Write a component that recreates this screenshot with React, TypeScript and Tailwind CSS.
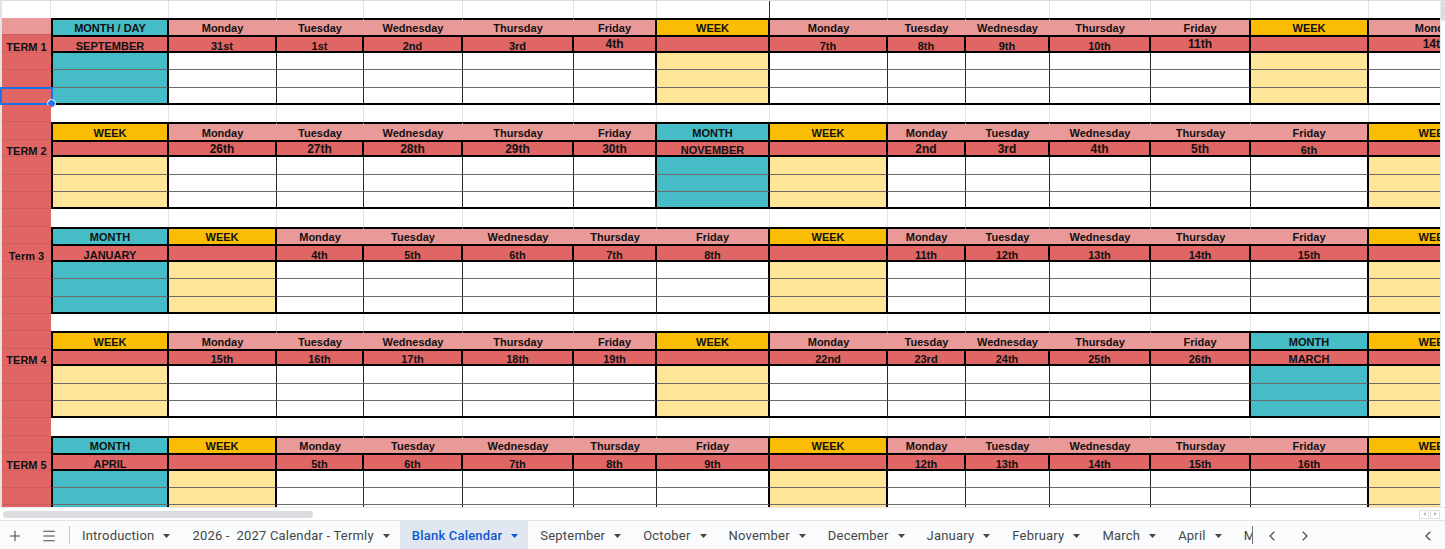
import { Plus, Menu, ChevronLeft, ChevronRight } from "lucide-react"

type Col =
    | { k: 'day', day: string, date: string, big?: boolean }
    | { k: 'month', head: string, month: string }
    | { k: 'week' }

const d = (day: string, date: string, big = false): Col => ({ k: 'day', day, date, big })
const W: Col = { k: 'week' }
const M = (month: string, head = 'MONTH'): Col => ({ k: 'month', head, month })

// column widths B..O
const widths = ['w-[118px]', 'w-[108px]', 'w-[87px]', 'w-[99px]', 'w-[111px]', 'w-[83px]', 'w-[113px]', 'w-[118px]', 'w-[78px]', 'w-[84px]', 'w-[101px]', 'w-[100px]', 'w-[118px]', 'w-[134px]']

const blocks: { term: string, cols: Col[] }[] = [
    {
        term: 'TERM 1',
        cols: [M('SEPTEMBER', 'MONTH / DAY'), d('Monday', '31st'), d('Tuesday', '1st'), d('Wednesday', '2nd'), d('Thursday', '3rd'), d('Friday', '4th', true), W,
            d('Monday', '7th'), d('Tuesday', '8th'), d('Wednesday', '9th'), d('Thursday', '10th'), d('Friday', '11th', true), W, d('Monday', '14th', true)]
    },
    {
        term: 'TERM 2',
        cols: [W, d('Monday', '26th', true), d('Tuesday', '27th', true), d('Wednesday', '28th', true), d('Thursday', '29th', true), d('Friday', '30th', true), M('NOVEMBER'), W,
            d('Monday', '2nd', true), d('Tuesday', '3rd', true), d('Wednesday', '4th', true), d('Thursday', '5th', true), d('Friday', '6th'), W]
    },
    {
        term: 'Term 3',
        cols: [M('JANUARY'), W, d('Monday', '4th'), d('Tuesday', '5th'), d('Wednesday', '6th'), d('Thursday', '7th'), d('Friday', '8th'), W,
            d('Monday', '11th'), d('Tuesday', '12th'), d('Wednesday', '13th'), d('Thursday', '14th'), d('Friday', '15th'), W]
    },
    {
        term: 'TERM 4',
        cols: [W, d('Monday', '15th'), d('Tuesday', '16th'), d('Wednesday', '17th'), d('Thursday', '18th'), d('Friday', '19th'), W,
            d('Monday', '22nd'), d('Tuesday', '23rd'), d('Wednesday', '24th'), d('Thursday', '25th'), d('Friday', '26th'), M('MARCH'), W]
    },
    {
        term: 'TERM 5',
        cols: [M('APRIL'), W, d('Monday', '5th'), d('Tuesday', '6th'), d('Wednesday', '7th'), d('Thursday', '8th'), d('Friday', '9th'), W,
            d('Monday', '12th'), d('Tuesday', '13th'), d('Wednesday', '14th'), d('Thursday', '15th'), d('Friday', '16th'), W]
    },
]

const tabs = ['Introduction', '2026 -  2027 Calendar - Termly', 'Blank Calendar', 'September', 'October', 'November', 'December', 'January', 'February', 'March', 'April', 'May']

const cellText = "font-['Liberation_Sans',Arial,sans-serif] text-[11px] font-bold leading-none text-[#111] whitespace-nowrap"

const Caret = ({ color }: { color: string }) => (
    <svg width="7" height="4" viewBox="0 0 7 4"><path d="M0 0h7L3.5 4z" fill={color} /></svg>
)

const Column = ({ col, w, first, thick }: { col: Col, w: string, first: boolean, thick: boolean }) => {
    const left = first ? 'border-l-2 border-l-black' : ''
    const headBg = col.k === 'day' ? 'bg-[#ea9999]' : col.k === 'month' ? 'bg-[#46bdc6]' : 'bg-[#fbbc04]'
    const bodyBg = col.k === 'day' ? 'bg-white' : col.k === 'month' ? 'bg-[#46bdc6]' : 'bg-[#ffe599]'
    const headRight = thick ? 'border-r-2 border-r-black' : 'border-r border-r-[#e3a0a0]'
    const bodyRight = thick ? 'border-r-2 border-r-black' : 'border-r border-r-[#2b2b2b]'
    const head = col.k === 'day' ? col.day : col.k === 'month' ? col.head : 'WEEK'
    const date = col.k === 'day' ? col.date : col.k === 'month' ? col.month : ''
    const big = col.k === 'day' && col.big

    return (
        <div className={`${w} shrink-0 flex flex-col`}>
            <div className={`h-[17.42px] flex items-end justify-center pb-[1px] border-t-2 border-t-black ${headBg} ${headRight} ${left} ${cellText}`}>
                {head}
            </div>
            <div className={`h-[17.42px] flex justify-center border-y-2 border-y-black border-r-2 border-r-black bg-[#e06666] ${left} ${big ? 'items-start pt-[1px]' : 'items-end'} ${cellText}`}>
                <span className={big ? 'text-[12px]' : 'translate-y-px'}>{date}</span>
            </div>
            <div className={`h-[17.42px] border-b border-b-[#6b6b6b] ${bodyBg} ${bodyRight} ${left}`}></div>
            <div className={`h-[17.42px] border-b border-b-[#6b6b6b] ${bodyBg} ${bodyRight} ${left}`}></div>
            <div className={`h-[17.42px] border-b-2 border-b-black ${bodyBg} ${bodyRight} ${left}`}></div>
        </div>
    )
}

const BlankRow = () => (
    <div className="flex h-[17.42px]">
        {widths.map((w, i) => (
            <div key={i} className={`${w} shrink-0 h-full bg-white border-r border-r-[#e2e3e3]`}></div>
        ))}
    </div>
)

const TermCol = ({ label, first }: { label: string, first: boolean }) => (
    <div className="w-[51px] shrink-0 flex flex-col border-l-2 border-l-[#e3e3e3]">
        {[0, 1, 2, 3, 4, 5].map(i => (
            <div key={i} className={`relative h-[17.42px] flex items-end justify-center border-b border-b-[#cf5d5d] ${first && i === 0 ? 'bg-[#ea9999]' : 'bg-[#e06666]'} ${cellText}`}>
                {i === 1 ? <span className="translate-y-px">{label}</span> : null}
                {first && i === 4 ? (
                    <div className="absolute -inset-x-[2px] -top-px -bottom-px border-2 border-[#1a73e8]">
                        <div className="absolute -right-[5px] -bottom-[5px] size-[9px] rounded-full bg-[#1a73e8] border border-white"></div>
                    </div>
                ) : null}
            </div>
        ))}
    </div>
)

const Block = ({ term, cols, first }: { term: string, cols: Col[], first: boolean }) => {
    const heavy = (c?: Col) => !!c && c.k !== 'day'
    return (
        <div className="flex">
            <TermCol label={term} first={first} />
            <div className="flex flex-col">
                <div className="flex">
                    {cols.map((c, i) => (
                        <Column key={i} col={c} w={widths[i]} first={i === 0} thick={heavy(c) || heavy(cols[i + 1])} />
                    ))}
                </div>
                <BlankRow />
            </div>
        </div>
    )
}

export default function App() {
    return (
        <div className="w-[1445px] h-[549px] flex flex-col bg-white overflow-hidden">
            <div className="h-[507px] flex border-t border-t-[#dadce0]">
                <div className="w-[1440px] overflow-hidden">
                    <div className="flex h-[17px]">
                        <div className="w-[51px] shrink-0 border-l-2 border-l-[#e3e3e3] border-r border-r-[#e2e3e3]"></div>
                        <div className="flex">
                            {widths.map((w, i) => (
                                <div key={i} className={`${w} shrink-0 h-full border-r ${i === 6 ? 'border-r-[#333]' : 'border-r-[#e2e3e3]'}`}></div>
                            ))}
                        </div>
                    </div>
                    {blocks.map((b, i) => <Block key={i} term={b.term} cols={b.cols} first={i === 0} />)}
                </div>
                <div className="w-[5px] flex flex-col border-l border-l-[#e8eaed] bg-white">
                    <div className="h-[20px] rounded-full bg-[#dadce0]"></div>
                </div>
            </div>

            {/* horizontal scroll strip */}
            <div className="h-[13px] flex items-center border-t border-t-[#e8eaed] bg-white">
                <div className="ml-[3px] w-[310px] h-[7px] rounded-full bg-[#dadce0]"></div>
                <div className="ml-auto mr-[5px] flex gap-px">
                    <div className="w-[10px] h-[9px] border border-[#e0e0e0] flex items-center justify-center">
                        <svg width="3" height="4" viewBox="0 0 3 4"><path d="M3 0v4L0 2z" fill="#bbb" /></svg>
                    </div>
                    <div className="w-[10px] h-[9px] border border-[#e0e0e0] flex items-center justify-center">
                        <svg width="3" height="4" viewBox="0 0 3 4"><path d="M0 0v4l3-2z" fill="#bbb" /></svg>
                    </div>
                </div>
            </div>

            {/* sheet tabs */}
            <div className="h-[29px] flex items-stretch bg-[#f9fbfd] border-t border-t-[#e1e3e1] font-['Roboto',sans-serif] text-[13px] tracking-[0.2px] text-[#444746]">
                <div className="w-[30px] flex items-center justify-center pt-[2px]"><Plus size={16} strokeWidth={1.6} /></div>
                <div className="w-[30px] ml-[4px] flex items-center justify-center pt-[2px]"><Menu size={16} strokeWidth={1.6} /></div>
                <div className="w-px h-[18px] self-center bg-[#c4c7c5] ml-[5px]"></div>
                <div className="w-[1182px] flex overflow-hidden">
                    {tabs.map(t => {
                        const on = t === 'Blank Calendar'
                        return (
                            <div key={t} className={`shrink-0 flex items-center pt-[2px] pl-3 pr-[10px] gap-[9px] whitespace-pre ${on ? 'bg-[#e1e7f0] text-[#0b57d0] font-medium' : ''}`}>
                                {t}
                                <Caret color={on ? '#0b57d0' : '#444746'} />
                            </div>
                        )
                    })}
                </div>
                <div className="w-px h-[18px] self-center bg-[#747775]"></div>
                <div className="w-[37px] flex items-center justify-center pt-[2px]"><ChevronLeft size={16} strokeWidth={1.6} /></div>
                <div className="w-[30px] flex items-center justify-center pt-[2px]"><ChevronRight size={16} strokeWidth={1.6} /></div>
                <div className="ml-auto w-[30px] flex items-center justify-center mr-[2px] pt-[2px]"><ChevronLeft size={16} strokeWidth={1.6} /></div>
            </div>
        </div>
    )
}
